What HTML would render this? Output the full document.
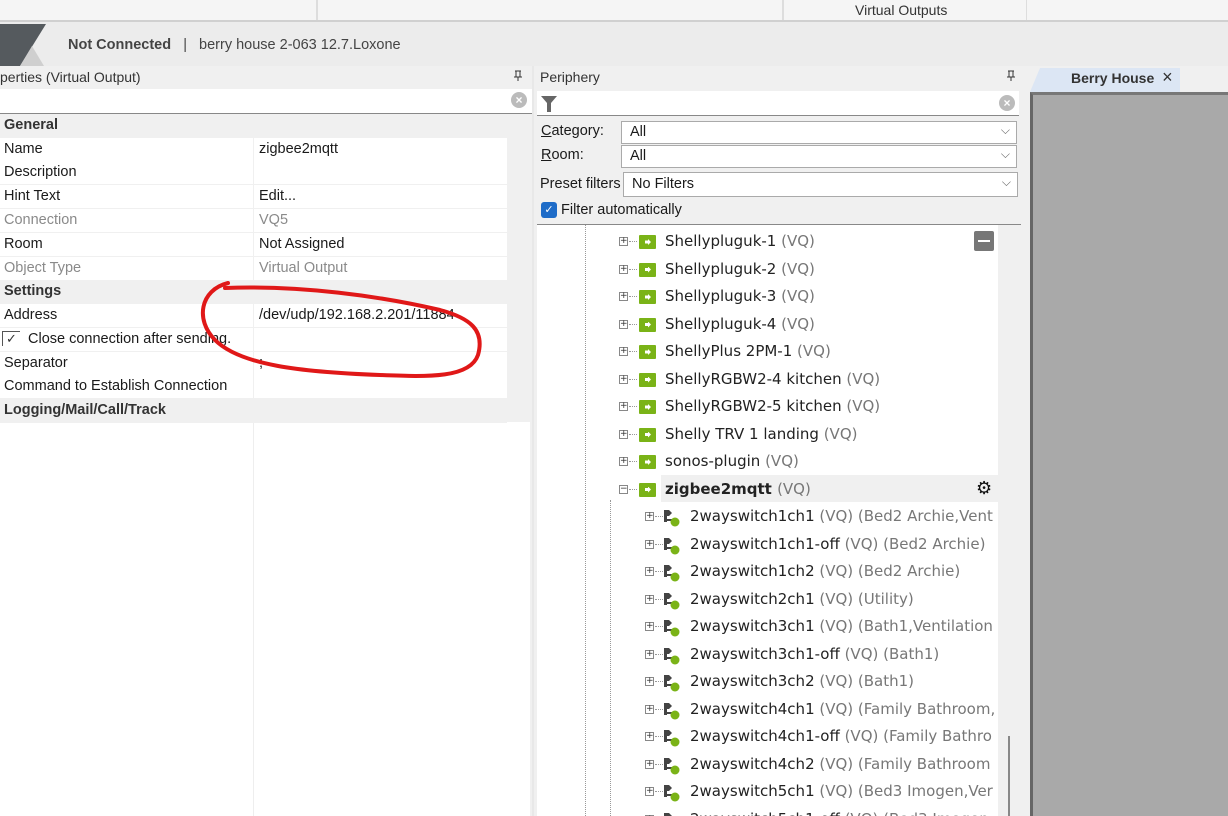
<!DOCTYPE html>
<html><head><meta charset="utf-8"><style>
*{margin:0;padding:0;box-sizing:border-box}
body{width:1228px;height:816px;overflow:hidden;background:#f0f0f0;font-family:"Liberation Sans",sans-serif;position:relative;color:#1a1a1a}
.a{position:absolute;white-space:nowrap}
.pr{position:absolute;left:0;width:507px;height:24px;font-size:14.5px;line-height:23px;border-bottom:1px solid #f0f0f0;background:#fff}
.pr .k{position:absolute;left:4px}
.pr .v{position:absolute;left:259px}
.pr .d{position:absolute;left:253px;top:0;bottom:0;border-left:1px solid #f0f0f0}
.cat{background:#f0f0f0;font-weight:bold;color:#333}
.g{color:#8a8a8a}
.tr{position:absolute;height:27px;font-family:"DejaVu Sans",sans-serif;font-size:15px;line-height:27px;color:#222;white-space:nowrap}
.tr i{font-style:normal;color:#777}
.pl{position:absolute;width:9px;height:9px;border:1px solid #888;background:#fff;font-size:9px;line-height:7px;text-align:center;color:#333;font-family:"DejaVu Sans",sans-serif}
.ic{position:absolute;width:17px;height:14px;background:#7ab317;border-radius:1px}
.ic:after{content:"";position:absolute;left:6px;top:4px;width:6px;height:6px;background:#fff;clip-path:polygon(0 25%,50% 25%,50% 0,100% 50%,50% 100%,50% 75%,0 75%)}
.combo{position:absolute;height:23px;background:#fff;border:1px solid #aaa;font-size:14.5px;line-height:21px;padding-left:8px}
.combo:after{content:"⌵";position:absolute;right:6px;top:-2px;color:#666;font-size:12px}
</style></head><body>
<div class="a" style="left:0;top:0;width:1228px;height:22px;background:#f5f5f5;border-bottom:2px solid #d0d0d0"></div>
<div class="a" style="left:316px;top:0;width:2px;height:20px;background:#ddd"></div>
<div class="a" style="left:782px;top:0;width:2px;height:20px;background:#ddd"></div>
<div class="a" style="left:1026px;top:0;width:1px;height:20px;background:#ddd"></div>
<div class="a" style="left:855px;top:2px;font-size:14px;color:#333">Virtual Outputs</div>
<div class="a" style="left:0;top:22px;width:1228px;height:44px;background:#ececec"></div>
<svg class="a" style="left:0;top:24px" width="48" height="42"><polygon points="0,0 46,0 20,42 0,42" fill="#555a5e"/><polygon points="20,42 32,22 44,42" fill="#cfcfcf"/></svg>
<div class="a" style="left:68px;top:37px;font-size:14.5px;color:#444"><b>Not Connected</b> &nbsp;&nbsp;| &nbsp;&nbsp;berry house 2-063 12.7.Loxone</div>
<div class="a" style="left:0;top:69px;font-size:14px;color:#333">perties (Virtual Output)</div>
<svg class="a" style="left:513px;top:70px" width="10" height="12"><path d="M2,1H8M3,1V7M7,1V7M1,7H9M5,7V11" stroke="#333" fill="none"/></svg>
<div class="a" style="left:0;top:89px;width:532px;height:25px;background:#fff;border-bottom:1px solid #888"></div>
<div class="a" style="left:511px;top:92px;width:16px;height:16px;border-radius:50%;background:#bbb;color:#fff;font-size:12px;line-height:16px;text-align:center;font-weight:bold">×</div>
<div class="a" style="left:0;top:422px;width:530px;height:394px;background:#fff"></div>
<div class="a" style="left:253px;top:422px;width:1px;height:394px;background:#eee"></div>
<div class="pr cat" style="top:114px"><span class="k">General</span></div>
<div class="pr" style="top:138px"><span class="k">Name</span><span class="d"></span><span class="v">zigbee2mqtt</span></div>
<div class="pr" style="top:161px"><span class="k">Description</span><span class="d"></span></div>
<div class="pr" style="top:185px"><span class="k">Hint Text</span><span class="d"></span><span class="v">Edit...</span></div>
<div class="pr g" style="top:209px"><span class="k">Connection</span><span class="d"></span><span class="v">VQ5</span></div>
<div class="pr" style="top:233px"><span class="k">Room</span><span class="d"></span><span class="v">Not Assigned</span></div>
<div class="pr g" style="top:257px"><span class="k">Object Type</span><span class="d"></span><span class="v">Virtual Output</span></div>
<div class="pr cat" style="top:280px"><span class="k">Settings</span></div>
<div class="pr" style="top:304px"><span class="k">Address</span><span class="d"></span><span class="v">/dev/udp/192.168.2.201/11884</span></div>
<div class="pr" style="top:328px"><span class="k" style="left:28px">Close connection after sending.</span><span class="d"></span></div>
<div class="a" style="left:2px;top:331px;font-size:13px;color:#333;border-left:1px solid #555;border-top:1px solid #555;padding:0 3px;line-height:14px">✓</div>
<div class="pr" style="top:352px"><span class="k">Separator</span><span class="d"></span><span class="v">;</span></div>
<div class="pr" style="top:375px"><span class="k">Command to Establish Connection</span><span class="d"></span></div>
<div class="pr cat" style="top:399px"><span class="k">Logging/Mail/Call/Track</span></div>
<div class="a" style="left:532px;top:66px;width:2px;height:750px;background:#e8e8e8"></div>
<div class="a" style="left:540px;top:69px;font-size:14px;color:#333">Periphery</div>
<svg class="a" style="left:1006px;top:70px" width="10" height="12"><path d="M2,1H8M3,1V7M7,1V7M1,7H9M5,7V11" stroke="#333" fill="none"/></svg>
<div class="a" style="left:537px;top:91px;width:482px;height:25px;background:#fff;border-bottom:1px solid #888"></div>
<svg class="a" style="left:540px;top:95px" width="18" height="18"><polygon points="1,1 17,1 11,8 11,17 7,17 7,8" fill="#666"/></svg>
<div class="a" style="left:999px;top:95px;width:16px;height:16px;border-radius:50%;background:#bbb;color:#fff;font-size:12px;line-height:16px;text-align:center;font-weight:bold">×</div>
<div class="a" style="left:541px;top:123px;font-size:14.5px"><u>C</u>ategory:</div>
<div class="a" style="left:541px;top:147px;font-size:14.5px"><u>R</u>oom:</div>
<div class="a" style="left:540px;top:176px;font-size:14.5px">Preset filters</div>
<div class="combo" style="left:621px;top:121px;width:396px">All</div>
<div class="combo" style="left:621px;top:145px;width:396px">All</div>
<div class="combo" style="left:623px;top:172px;width:395px;height:25px;line-height:23px">No Filters</div>
<div class="a" style="left:541px;top:202px;width:16px;height:16px;border-radius:3px;background:#1e6cc8;color:#fff;font-size:11px;line-height:16px;text-align:center">✓</div>
<div class="a" style="left:561px;top:202px;font-size:14.5px">Filter automatically</div>
<div class="a" style="left:537px;top:224px;width:484px;height:1px;background:#888"></div>
<div class="a" style="left:537px;top:225px;width:461px;height:591px;background:#fff"></div>
<div class="a" style="left:998px;top:225px;width:22px;height:591px;background:#f0f0f0"></div>
<div class="a" style="left:1008px;top:736px;width:2px;height:80px;background:#888"></div>
<div class="a" style="left:585px;top:225px;width:0;height:591px;border-left:1px dotted #999"></div>
<div class="a" style="left:610px;top:500px;width:0;height:316px;border-left:1px dotted #999"></div>
<div class="a" style="left:974px;top:231px;width:20px;height:20px;background:#777;border-radius:2px"><div style="margin:9px 4px;height:2px;background:#fff"></div></div>
<div class="a" style="left:661px;top:475px;width:337px;height:27px;background:#f0f0f0"></div>
<div id="t1"></div>
<div class="a" style="left:976px;top:478px;font-size:18px;color:#111">⚙</div>
<div class="a" style="left:1022px;top:66px;width:206px;height:750px;background:#f0f0f0"></div>
<div class="a" style="left:1030px;top:68px;width:150px;height:24px;background:#dce6f4;clip-path:polygon(10px 0,100% 0,100% 100%,0 100%)"></div>
<div class="a" style="left:1071px;top:70px;font-size:14px;font-weight:bold;color:#333">Berry House <span style="font-weight:normal;margin-left:4px;font-size:18px;line-height:14px">×</span></div>
<div class="a" style="left:1030px;top:92px;width:198px;height:724px;background:#a9a9a9;border-left:3px solid #666;border-top:3px solid #777"></div>
<svg class="a" style="left:0;top:0" width="1228" height="816"><path d="M228,283 C200,290 195,320 215,340 C240,365 300,372 380,375 C430,377 470,378 478,355 C485,330 470,318 440,310 C380,296 300,285 225,288" fill="none" stroke="#e01818" stroke-width="4" stroke-linecap="round"/></svg>
<script>
var rows=[["Shellypluguk-1"],["Shellypluguk-2"],["Shellypluguk-3"],["Shellypluguk-4"],["ShellyPlus 2PM-1"],["ShellyRGBW2-4 kitchen"],["ShellyRGBW2-5 kitchen"],["Shelly TRV 1 landing"],["sonos-plugin"],["zigbee2mqtt",1],
["2wayswitch1ch1",2," (Bed2 Archie,Vent"],["2wayswitch1ch1-off",2," (Bed2 Archie)"],["2wayswitch1ch2",2," (Bed2 Archie)"],["2wayswitch2ch1",2," (Utility)"],["2wayswitch3ch1",2," (Bath1,Ventilation"],["2wayswitch3ch1-off",2," (Bath1)"],["2wayswitch3ch2",2," (Bath1)"],["2wayswitch4ch1",2," (Family Bathroom,"],["2wayswitch4ch1-off",2," (Family Bathro"],["2wayswitch4ch2",2," (Family Bathroom"],["2wayswitch5ch1",2," (Bed3 Imogen,Ver"],["2wayswitch5ch1-off",2," (Bed3 Imogen"]];
var h="";rows.forEach(function(r,i){var y=228+i*27.5;var c=r[1]==2;var px=c?645:619;
h+='<div class="pl" style="left:'+px+'px;top:'+(y+9)+'px">'+(r[1]==1?'−':'+')+'</div>';
h+='<div class="a" style="left:'+(px+10)+'px;top:'+(y+13)+'px;width:8px;border-top:1px dotted #999"></div>';
if(c){h+='<svg class="a" style="left:'+(px+17)+'px;top:'+(y+5)+'px" width="22" height="20"><polygon points="2,2 7,2 10,5 7,8 7,8 2,8" fill="#444"/><rect x="2" y="2" width="3" height="12" fill="#444"/><rect x="5" y="11" width="6" height="2" fill="#444"/><circle cx="13" cy="14" r="4.5" fill="#7ab317"/></svg>';}
else h+='<div class="ic" style="left:'+(px+20)+'px;top:'+(y+7)+'px"></div>';
var tx=c?690:665;
h+='<div class="tr" style="left:'+tx+'px;top:'+y+'px;'+(r[1]==1?'font-weight:bold;':'')+'">'+r[0]+' <i style="font-weight:normal">(VQ)'+(r[2]||'')+'</i></div>';});
var t=document.getElementById("t1");t.outerHTML='<div class="a" style="left:537px;top:225px;width:460px;height:591px;overflow:hidden"><div style="position:relative;left:-537px;top:-225px">'+h+'</div></div>';
</script>
</body></html>
